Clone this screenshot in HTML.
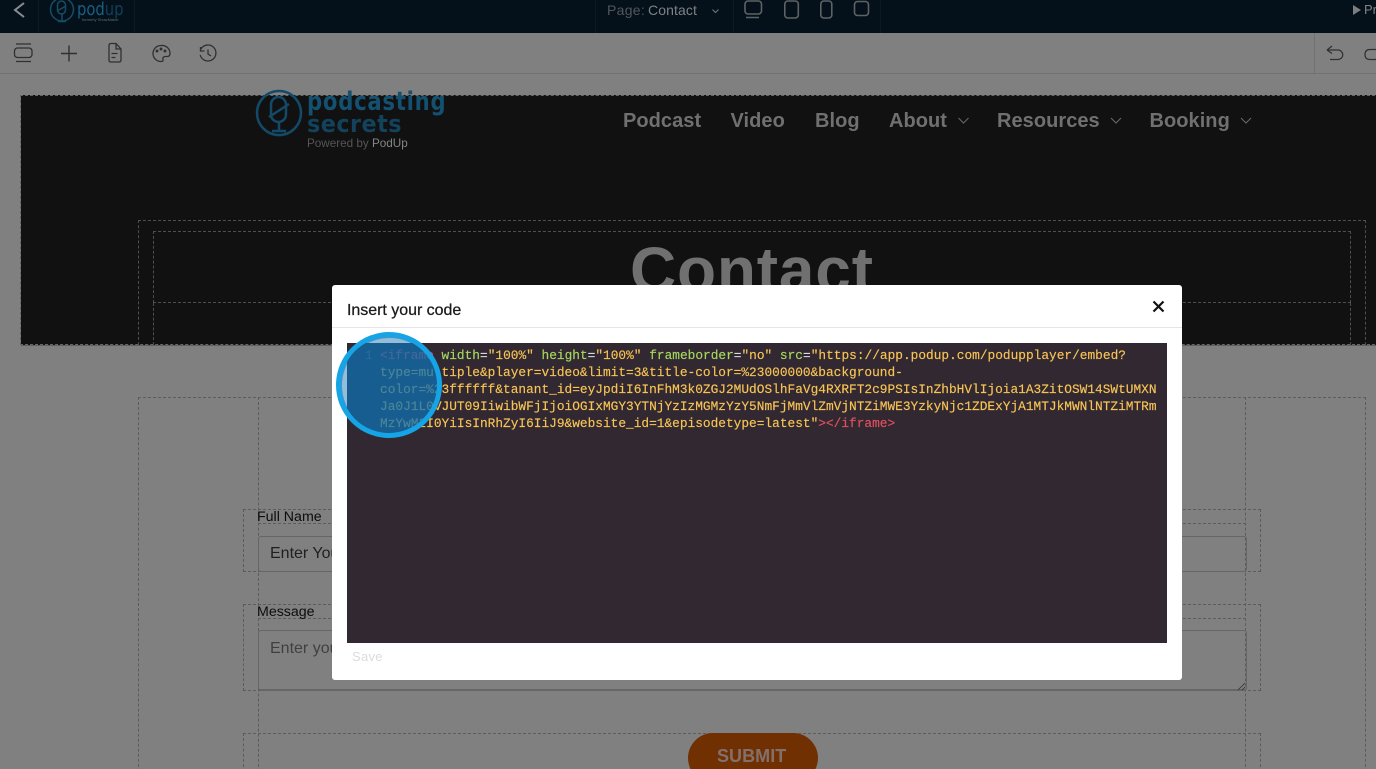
<!DOCTYPE html>
<html><head><meta charset="utf-8"><style>
html,body{margin:0;padding:0;width:1376px;height:769px;overflow:hidden;background:#808080;font-family:"Liberation Sans",sans-serif}
#w{position:relative;width:1376px;height:769px;overflow:hidden;background:#808080}
.a{position:absolute;box-sizing:border-box}
.t{position:absolute;white-space:nowrap;line-height:1}
.d{position:absolute;box-sizing:border-box;border:1px dashed #5c5c5c}
.nav{position:absolute;top:110px;font-size:20px;font-weight:bold;color:#707070;line-height:23px;white-space:nowrap;letter-spacing:.05px}
.code{position:absolute;left:380px;font:12.82px/17.1px "Liberation Mono",monospace;color:#f8c555;white-space:pre;-webkit-text-stroke:.15px currentColor}
svg{position:absolute;overflow:visible}
</style></head><body><div id="w">
<!-- top bar -->
<div class="a" style="left:0;top:0;width:1376px;height:33px;background:#05111a"></div>
<div class="a" style="left:38px;top:0;width:1px;height:33px;background:#0c1a24"></div>
<div class="a" style="left:134px;top:0;width:1px;height:33px;background:#0c1a24"></div>
<div class="a" style="left:595px;top:0;width:1px;height:33px;background:#0c1a24"></div>
<div class="a" style="left:733px;top:0;width:1px;height:33px;background:#0c1a24"></div>
<div class="a" style="left:880px;top:0;width:1px;height:33px;background:#0c1a24"></div>
<svg style="left:0;top:0" width="60" height="33" fill="none"><path d="M24 3L15 10L24 17" stroke="#8a8d8f" stroke-width="2"/></svg>
<svg style="left:48px;top:0" width="30" height="24" fill="none" stroke="#154c68" stroke-width="1.500"><circle cx="14" cy="9.500" r="11.500"/><rect x="9.500" y="1" width="8" height="13" rx="4"/><path d="M14 14v7M10 21.500h8M9 11l9-5"/></svg>
<div class="t" style="left:77px;top:1px;font-size:18px;color:#175f82;font-family:'DejaVu Sans',sans-serif;transform:scaleX(.82);transform-origin:left">pod<span style="color:#104058">up</span></div>
<div class="t" style="left:82px;top:18px;font-size:4px;color:#5a6a72">formerly ShowMaker</div>
<div class="t" style="left:607px;top:3px;font-size:14px;color:#4f575c;letter-spacing:.3px">Page:</div>
<div class="t" style="left:648px;top:3px;font-size:14px;color:#7d8285;letter-spacing:.1px">Contact</div>
<svg style="left:711px;top:8px" width="10" height="7" fill="none"><path d="M1.500 1.500L4.500 4.500L7.500 1.500" stroke="#74787b" stroke-width="1"/></svg>
<svg style="left:740px;top:0" width="135" height="20" fill="none" stroke="#5d6265" stroke-width="1.600"><rect x="5" y="1" width="16.500" height="13" rx="3"/><path d="M6 17.500h13" stroke-width="1.500"/><rect x="44.800" y="1" width="13.500" height="17" rx="3"/><rect x="80.800" y="1" width="11" height="17" rx="3"/><rect x="114.500" y="1.500" width="14" height="14" rx="3"/></svg>
<svg style="left:1352px;top:4px" width="10" height="12"><path d="M1 1l8 5l-8 5z" fill="#7b7e80"/></svg>
<div class="t" style="left:1364px;top:3px;font-size:13px;color:#808386">Pr</div>
<!-- toolbar -->
<div class="a" style="left:0;top:73px;width:1376px;height:1px;background:#717171"></div>
<div class="a" style="left:1314px;top:33px;width:1px;height:40px;background:#717171"></div>
<svg style="left:0;top:33px" width="230" height="40" fill="none" stroke="#303030" stroke-width="1.300">
<path d="M16 11h15M16 28.500h15"/><rect x="14.500" y="15" width="17.500" height="9.500" rx="3"/>
<path d="M69 12.500v16M61 20.500h16" stroke-width="1.400"/>
<path d="M109 12.500q0-2 2-2h5l5 5.500v11q0 2-2 2h-8q-2 0-2-2zM116 10.500v5.500h5M111.500 20.500h6M111.500 24.500h4"/>
<path d="M161 12.500a8 8 0 1 0 0 16q2.500 0 2-2q-.8-2.500 2-3h2.500q2.500 0 2.500-3.500a8 8 0 0 0-9-7.500z"/>
<circle cx="157" cy="18" r=".8" fill="#303030"/><circle cx="161" cy="16" r=".8" fill="#303030"/><circle cx="165" cy="18" r=".8" fill="#303030"/>
<path d="M201 16a8 8 0 1 1-.8 6M200.500 14v4h4M208 16.500v4.500l3 2"/>
</svg>
<svg style="left:1320px;top:33px" width="56" height="40" fill="none" stroke="#303030" stroke-width="1.200"><path d="M7 17h11a4.700 4.700 0 0 1 0 9.500H10M7 17l5-4M7 17l5 3.500"/><path d="M56 16.500h-6q-5 0-5 5t5 5h6"/></svg>
<!-- hero -->
<div class="a" style="left:21px;top:95px;width:1355px;height:251px;background:#111;border-bottom:1px solid #5f5f5f"></div>
<div class="d" style="left:20px;top:95px;width:1370px;height:250px;border-color:#666"></div>
<div class="d" style="left:138px;top:220px;width:1228px;height:125px;border-bottom:0;border-color:#4e4e4e"></div>
<div class="d" style="left:153px;top:231px;width:1198px;height:72px;border-color:#4e4e4e"></div>
<div class="d" style="left:153px;top:303px;width:1198px;height:42px;border-top:0;border-bottom:0;border-color:#4e4e4e"></div>
<svg style="left:254px;top:88px" width="50" height="50" fill="none" stroke="#134a69" stroke-width="2.500"><circle cx="25" cy="25" r="22"/><rect x="17" y="9" width="15" height="25" rx="7.500"/><path d="M25 34v9M18 43h14M15 29l20-13"/></svg>
<div class="t" style="left:307px;top:89px;font-size:26px;font-weight:bold;color:#14506f;letter-spacing:.9px;font-family:'DejaVu Sans',sans-serif;transform:scaleX(.815);transform-origin:left">podcasting</div>
<div class="t" style="left:307px;top:112px;font-size:24px;font-weight:bold;color:#12425c;letter-spacing:.5px;font-family:'DejaVu Sans',sans-serif;transform:scaleX(.93);transform-origin:left">secrets</div>
<div class="t" style="left:307px;top:138px;font-size:11.700px;color:#555">Powered by <span style="color:#858585">PodUp</span></div>
<div class="nav" style="left:623px">Podcast</div>
<div class="nav" style="left:730.500px">Video</div>
<div class="nav" style="left:815px">Blog</div>
<div class="nav" style="left:889px">About</div>
<div class="nav" style="left:997px">Resources</div>
<div class="nav" style="left:1149.500px">Booking</div>
<svg style="left:950px;top:110px" width="310" height="20" fill="none" stroke="#6a6a6a" stroke-width="1"><path d="M8.500 8L13.500 13L18.500 8M161 8L166 13L171 8M291 8L296 13L301 8"/></svg>
<div class="t" style="left:630px;top:238px;font-size:64px;font-weight:bold;color:#707070;letter-spacing:.8px">Contact</div>
<!-- form -->
<div class="d" style="left:138px;top:397px;width:1228px;height:400px"></div>
<div class="d" style="left:258px;top:397px;width:988px;height:400px"></div>
<div class="d" style="left:243px;top:509px;width:1018px;height:63px"></div>
<div class="d" style="left:243px;top:604px;width:1018px;height:87px"></div>
<div class="d" style="left:243px;top:733px;width:1018px;height:60px"></div>
<div class="a" style="left:258px;top:523px;width:988px;height:1px;border-top:1px dashed #5c5c5c"></div>
<div class="a" style="left:258px;top:618px;width:988px;height:1px;border-top:1px dashed #5c5c5c"></div>
<div class="t" style="left:257px;top:510px;font-size:14.200px;color:#0c0c0c">Full Name</div>
<div class="t" style="left:257px;top:605px;font-size:14.200px;color:#0c0c0c">Message</div>
<div class="a" style="left:258px;top:536px;width:989px;height:36px;border:1px solid #666;border-radius:3px"></div>
<div class="t" style="left:270px;top:546px;font-size:16px;color:#202020">Enter Your Name</div>
<div class="a" style="left:258px;top:630px;width:989px;height:61px;border:1px solid #666;border-bottom:2px solid #666;border-radius:3px"></div>
<div class="t" style="left:270px;top:641px;font-size:16px;color:#404040">Enter your message</div>
<svg style="left:1236px;top:682px" width="10" height="8" stroke="#333" stroke-width=".8"><path d="M2 8L9 1M6 8L9 5"/></svg>
<div class="a" style="left:688px;top:733px;width:130px;height:50px;background:#703002;border-radius:25px"></div>
<div class="t" style="left:717px;top:747px;font-size:18px;font-weight:bold;color:#84706a;letter-spacing:.05px">SUBMIT</div>
<!-- modal -->
<div class="a" style="left:332px;top:285px;width:850px;height:395px;background:#fff;border-radius:3px"></div>
<div class="a" style="left:332px;top:327px;width:850px;height:1px;background:#e6e6e6"></div>
<div class="t" style="left:347px;top:303px;font-size:16px;color:#1a1a1a;-webkit-text-stroke:.25px #1a1a1a;letter-spacing:-.03px">Insert your code</div>
<svg style="left:1152px;top:300px" width="13" height="13" fill="none" stroke="#111" stroke-width="2.200"><path d="M1.500 1.500L11.500 11.500M11.500 1.500L1.500 11.500"/></svg>
<div class="a" style="left:347px;top:343px;width:820px;height:300px;background:#322831"></div>
<div class="code" style="left:365px;top:347px;color:#6c6670">1</div>
<div class="code" style="top:347px"><span style="color:#e2505f">&lt;iframe</span> <span style="color:#a6d95f">width</span><span style="color:#ddd">=</span>"100%" <span style="color:#a6d95f">height</span><span style="color:#ddd">=</span>"100%" <span style="color:#a6d95f">frameborder</span><span style="color:#ddd">=</span>"no" <span style="color:#a6d95f">src</span><span style="color:#ddd">=</span>"https://app.podup.com/podupplayer/embed?
type=multiple&amp;player=video&amp;limit=3&amp;title-color=%23000000&amp;background-
color=%23ffffff&amp;tanant_id=eyJpdiI6InFhM3k0ZGJ2MUdOSlhFaVg4RXRFT2c9PSIsInZhbHVlIjoia1A3ZitOSW14SWtUMXN
Ja0J1L0VJUT09IiwibWFjIjoiOGIxMGY3YTNjYzIzMGMzYzY5NmFjMmVlZmVjNTZiMWE3YzkyNjc1ZDExYjA1MTJkMWNlNTZiMTRm
MzYwM2I0YiIsInRhZyI6IiJ9&amp;website_id=1&amp;episodetype=latest"<span style="color:#e2505f">&gt;&lt;/iframe&gt;</span></div>
<div class="t" style="left:352px;top:650px;font-size:13px;color:#dcdcdc;letter-spacing:.3px">Save</div>
<!-- highlight -->
<div class="a" style="left:336px;top:332px;width:106px;height:106px;border-radius:50%;border:5.500px solid #15a5e6;background:rgba(15,111,176,.75)"></div>
<div class="a" style="left:341.500px;top:337.500px;width:95px;height:95px;border-radius:50%;background:rgba(255,255,255,.4);clip-path:inset(0 89.500px 0 0)"></div>
<div class="a" style="left:341.500px;top:337.500px;width:95px;height:95px;border-radius:50%;background:rgba(255,255,255,.4);clip-path:inset(0 0 89.500px 5.500px)"></div>
</div></body></html>
